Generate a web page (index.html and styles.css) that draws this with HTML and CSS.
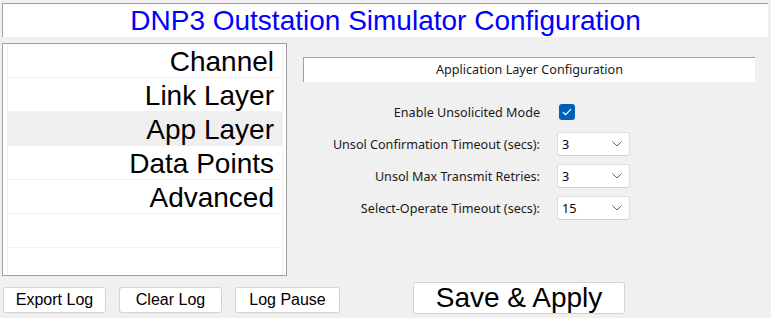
FILE: index.html
```html
<!DOCTYPE html>
<html lang="en">
<head>
  <meta charset="UTF-8">
  <meta name="viewport" content="width=device-width, initial-scale=1.0">
  <title>DNP3 Outstation Simulator Configuration</title>
  <link rel="stylesheet" href="styles.css">
</head>
<body>
  <div class="title-bar">DNP3 Outstation Simulator Configuration</div>

  <div class="main">
    <div class="nav-list">
      <div class="nav-inner">
        <div class="nav-item">Channel</div>
        <div class="nav-item">Link Layer</div>
        <div class="nav-item selected">App Layer</div>
        <div class="nav-item">Data Points</div>
        <div class="nav-item">Advanced</div>
        <div class="nav-item"></div>
        <div class="nav-item last"></div>
      </div>
    </div>

    <div class="panel">
      <div class="panel-header">Application Layer Configuration</div>
      <div class="form">
        <label class="field-label">Enable Unsolicited Mode</label>
        <div class="field">
          <span class="checkbox">
            <svg width="10" height="8" viewBox="0 0 10 8"><path d="M1 4.2 L3.6 6.6 L9 1.2" fill="none" stroke="#fff" stroke-width="1.2"/></svg>
          </span>
        </div>

        <label class="field-label">Unsol Confirmation Timeout (secs):</label>
        <div class="combo"><span>3</span><svg class="chev" width="10" height="6" viewBox="0 0 10 6"><path d="M0.5 0.5 L5 5 L9.5 0.5" fill="none" stroke="#5f5f5f" stroke-width="1"/></svg></div>

        <label class="field-label">Unsol Max Transmit Retries:</label>
        <div class="combo"><span>3</span><svg class="chev" width="10" height="6" viewBox="0 0 10 6"><path d="M0.5 0.5 L5 5 L9.5 0.5" fill="none" stroke="#5f5f5f" stroke-width="1"/></svg></div>

        <label class="field-label">Select-Operate Timeout (secs):</label>
        <div class="combo"><span>15</span><svg class="chev" width="10" height="6" viewBox="0 0 10 6"><path d="M0.5 0.5 L5 5 L9.5 0.5" fill="none" stroke="#5f5f5f" stroke-width="1"/></svg></div>
      </div>
    </div>
  </div>

  <div class="footer">
    <button class="small-btn">Export Log</button>
    <button class="small-btn">Clear Log</button>
    <button class="small-btn wide">Log Pause</button>
    <button class="save-btn">Save &amp; Apply</button>
  </div>
</body>
</html>
```

FILE: styles.css
```css
body {
  margin: 0;
  background: #f0f0f0;
  font-family: "Liberation Sans", Arial, sans-serif;
  color: #000;
  overflow: hidden;
}
.title-bar {
  margin: 3px 3px 0 2px;
  height: 33px;
  background: #fff;
  border-top: 1px solid #a0a0a0;
  border-left: 1px solid #a0a0a0;
  text-align: center;
  font-size: 28px;
  line-height: 33px;
  color: #0000ff;
}
.main {
  display: flex;
  margin-top: 6px;
  height: 233px;
}
.nav-list {
  margin-left: 2px;
  width: 283px;
  height: 231px;
  background: #fff;
  border: 1px solid #a0a0a0;
}
.nav-inner {
  margin: 0 3px 0 4px;
  height: 100%;
  border-left: 1px solid #f0f0f0;
  border-right: 1px solid #f0f0f0;
}
.nav-item {
  height: 31px;
  padding-top: 2px;
  border-bottom: 1px solid #f0f0f0;
  text-align: right;
  padding-right: 8px;
  font-size: 28px;
  line-height: 31px;
}
.nav-item.selected {
  background: #efefef;
}
.nav-item.last {
  border-bottom: none;
}
.panel {
  margin-left: 16px;
  padding-top: 14px;
  font-family: "Noto Sans", "Segoe UI", sans-serif;
  font-size: 12.6px;
}
.panel-header {
  width: 451px;
  height: 24px;
  background: #fff;
  border-top: 1px solid #a0a0a0;
  border-left: 1px solid #a0a0a0;
  text-align: center;
  line-height: 24px;
  color: #1a1a1a;
}
.form {
  display: grid;
  grid-template-columns: 237px 73px;
  grid-auto-rows: 24px;
  column-gap: 17px;
  row-gap: 8px;
  margin-top: 18px;
  align-items: center;
}
.field-label {
  text-align: right;
  color: #1a1a1a;
}
.field {
  display: flex;
  align-items: center;
}
.checkbox {
  display: flex;
  align-items: center;
  justify-content: center;
  margin-left: 2px;
  width: 16px;
  height: 16px;
  border-radius: 3px;
  background: #005fb8;
}
.combo {
  display: flex;
  align-items: center;
  justify-content: space-between;
  box-sizing: border-box;
  height: 24px;
  padding: 0 7px 0 4px;
  background: #fff;
  border: 1px solid #e0e0e0;
  border-bottom-color: #cfcfcf;
  border-radius: 3px;
  color: #000;
}
.footer {
  display: flex;
  align-items: flex-start;
  gap: 13px;
  padding: 6px 0 0 3px;
}
button {
  font-family: "Liberation Sans", Arial, sans-serif;
  background: #fff;
  border: 1px solid #d3d3d3;
  border-radius: 3px;
  color: #000;
  padding: 0;
}
.small-btn {
  margin-top: 5px;
  width: 103px;
  height: 26px;
  font-size: 16px;
}
.small-btn.wide {
  width: 105px;
}
.save-btn {
  margin-left: 60px;
  width: 212px;
  height: 32px;
  font-size: 28px;
  line-height: 30px;
}
```
